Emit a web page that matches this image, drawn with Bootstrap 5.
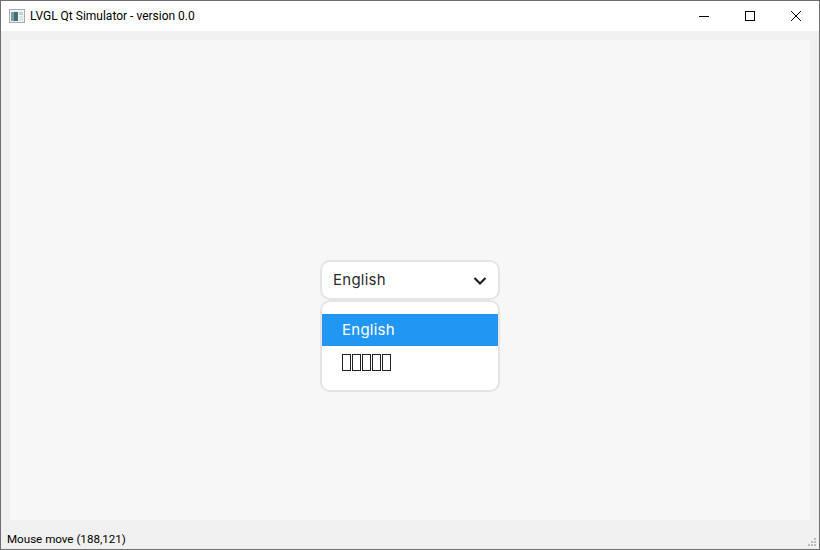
<!DOCTYPE html>
<html lang="en">
<head>
    <meta charset="UTF-8">
    <title>LVGL Qt Simulator</title>
    <link href="https://cdn.jsdelivr.net/npm/bootstrap@5.3.0/dist/css/bootstrap.min.css" rel="stylesheet">
    <style>
        html, body { height: 100%; overflow: hidden; }
        body { background: #f0f0f0; }
        .sim-window {
            height: 550px;
            border: 1px solid #6f6f6f;
            background: #f0f0f0;
        }
        .sim-title {
            height: 30px;
            background: #fff;
            font-family: Roboto, sans-serif;
            font-size: 12px;
            color: #000;
        }
        .sim-title-icon { margin-left: 8px; margin-right: 5px; }
        .win-btn {
            width: 46px;
            height: 30px;
        }
        .sim-canvas {
            height: 480px;
            margin: 9px 9px 0 9px;
            background: #f7f7f7;
        }
        .drop-wrap {
            width: 180px;
        }
        .drop-box {
            background: #fff;
            border: 2px solid #e7e3e5;
            border-radius: 10px;
            font-family: Inter, sans-serif;
            font-size: 15px;
            letter-spacing: 0.25px;
            color: #2b2b2b;
        }
        .drop-head {
            height: 40px;
            padding: 1px 11px 0;
        }
        .drop-list {
            top: 100%;
            height: 92px;
            padding: 12px 0;
        }
        .drop-item {
            height: 32px;
            padding-left: 20px;
        }
        .drop-item-active {
            background: #2196f3;
            color: #fff;
        }
        .tofu {
            display: inline-block;
            width: 9px;
            height: 17px;
            margin-right: 1px;
            border: 1px solid #222;
        }
        .sim-status {
            height: 29px;
            font-family: Roboto, sans-serif;
            font-size: 11.6px;
            color: #000;
            padding-left: 6px;
            padding-top: 11px;
        }
    </style>
</head>
<body>
    <div class="sim-window d-flex flex-column">
        <div class="sim-title d-flex align-items-center">
            <svg class="sim-title-icon" width="16" height="16" viewBox="0 0 16 16">
                <rect x="0.5" y="1.5" width="15" height="13" fill="#f2f2f2" stroke="#a9a9a9"/>
                <rect x="2" y="4" width="7" height="9" fill="#3f6f78"/>
                <rect x="2" y="4" width="3" height="9" fill="#7f9aa6"/>
                <rect x="10" y="4" width="4" height="3" fill="#c6d4cf"/>
                <rect x="10" y="8" width="4" height="5" fill="#dfe5e3"/>
            </svg>
            <span class="flex-grow-1">LVGL Qt Simulator - version 0.0</span>
            <div class="win-btn d-flex align-items-center justify-content-center">
                <svg width="10" height="10" viewBox="0 0 10 10"><path d="M0 5.5H10" stroke="#000" fill="none"/></svg>
            </div>
            <div class="win-btn d-flex align-items-center justify-content-center">
                <svg width="10" height="10" viewBox="0 0 10 10"><rect x="0.5" y="0.5" width="9" height="9" stroke="#000" fill="none"/></svg>
            </div>
            <div class="win-btn d-flex align-items-center justify-content-center">
                <svg width="10" height="10" viewBox="0 0 10 10"><path d="M0 0L10 10M10 0L0 10" stroke="#000" stroke-width="1" fill="none"/></svg>
            </div>
        </div>

        <div class="sim-canvas d-flex align-items-center justify-content-center">
            <div class="drop-wrap position-relative">
                <div class="drop-box drop-head d-flex align-items-center justify-content-between">
                    <span>English</span>
                    <svg width="14" height="10" viewBox="0 0 14 10"><path d="M1.5 2L7 7.5L12.5 2" stroke="#212121" stroke-width="2.2" fill="none"/></svg>
                </div>
                <div class="drop-box drop-list position-absolute start-0 end-0">
                    <div class="drop-item drop-item-active d-flex align-items-center">English</div>
                    <div class="drop-item d-flex align-items-center">
                        <span class="tofu"></span><span class="tofu"></span><span class="tofu"></span><span class="tofu"></span><span class="tofu"></span>
                    </div>
                </div>
            </div>
        </div>

        <div class="sim-status position-relative">
            Mouse move (188,121)
            <svg class="position-absolute bottom-0 end-0" width="12" height="12" viewBox="0 0 12 12">
                <path d="M7 1h2v2h-2zM4 4h2v2h-2zM7 4h2v2h-2zM1 7h2v2h-2zM4 7h2v2h-2zM7 7h2v2h-2z" fill="#bdbdbd"/>
            </svg>
        </div>
    </div>
    <script src="https://cdn.jsdelivr.net/npm/bootstrap@5.3.0/dist/js/bootstrap.bundle.min.js"></script>
</body>
</html>
